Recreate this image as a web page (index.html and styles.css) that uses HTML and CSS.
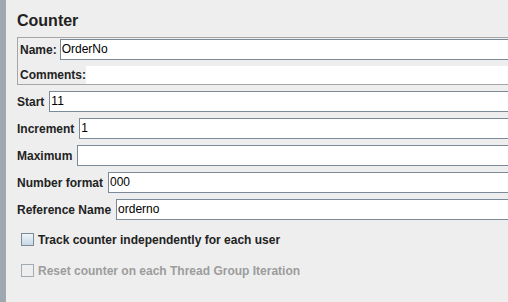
FILE: index.html
```html
<!DOCTYPE html>
<html>
<head>
<meta charset="utf-8">
<link rel="stylesheet" href="styles.css">
</head>
<body>
<div class="app">
  <div class="splitter"></div>
  <div class="main">
    <div class="title">Counter</div>
    <div class="namebox">
      <div class="name-row">
        <span class="lbl">Name:</span>
        <div class="field">OrderNo</div>
      </div>
      <div class="comments-row">
        <span class="lbl">Comments:</span>
        <div class="area"></div>
      </div>
    </div>
    <div class="rows">
      <div class="row"><span class="lbl">Start</span><div class="field">11</div></div>
      <div class="row"><span class="lbl">Increment</span><div class="field">1</div></div>
      <div class="row"><span class="lbl">Maximum</span><div class="field"></div></div>
      <div class="row"><span class="lbl">Number format</span><div class="field">000</div></div>
      <div class="row"><span class="lbl">Reference Name</span><div class="field">orderno</div></div>
    </div>
    <div class="checks">
      <label class="check"><span class="box"></span><span class="ctext">Track counter independently for each user</span></label>
      <label class="check disabled"><span class="box"></span><span class="ctext">Reset counter on each Thread Group Iteration</span></label>
    </div>
  </div>
</div>
</body>
</html>
```
FILE: styles.css
```css
html, body {
  margin: 0;
  padding: 0;
  width: 508px;
  height: 302px;
  overflow: hidden;
  background: #eeeeee;
  font-family: "Liberation Sans", Arial, sans-serif;
  font-size: 12px;
  color: #222;
}

.app {
  display: flex;
  width: 508px;
  height: 302px;
}

.splitter {
  flex: 0 0 5px;
  border-right: 1px solid #a8a8a8;
  background-color: #e4e4e4;
  background-image: radial-gradient(circle at 1px 1px, #9aa4ad 0.7px, transparent 0.8px);
  background-size: 2px 2px;
}

.main {
  flex: 1;
  min-width: 0;
  padding-left: 11px;
}

.title {
  font-size: 16px;
  font-weight: bold;
  line-height: 19px;
  padding-top: 11px;
  margin-bottom: 7px;
}

.lbl {
  font-weight: bold;
  white-space: nowrap;
}

.namebox {
  border: 1px solid #a6a6a6;
  border-right: none;
  padding: 1px 0 0 2px;
  display: flex;
  flex-direction: column;
  gap: 6px;
}

.name-row {
  display: flex;
  align-items: center;
  gap: 3px;
  height: 21px;
}

.field {
  flex: 1;
  min-width: 0;
  height: 19px;
  line-height: 19px;
  background: #fff;
  border: 1px solid #7a8a99;
  border-right: none;
  padding-left: 1px;
  color: #000;
  font-size: 12px;
}

.comments-row {
  display: flex;
  align-items: center;
  height: 18px;
}

.area {
  flex: 1;
  height: 18px;
  background: #fff;
}

.rows {
  margin-top: 6px;
  display: flex;
  flex-direction: column;
  gap: 6px;
}

.row {
  display: flex;
  align-items: center;
  gap: 5px;
  height: 21px;
}

.checks {
  margin-top: 9px;
  display: flex;
  flex-direction: column;
  gap: 10px;
  padding-left: 4px;
}

.check {
  display: flex;
  align-items: center;
  gap: 4px;
  height: 21px;
  font-weight: bold;
}

.box {
  width: 11px;
  height: 11px;
  border: 1px solid #7a8a99;
  background: linear-gradient(to bottom, #eef3f8, #c9d8e7);
}

.ctext {
  color: #222;
}

.disabled .box {
  border-color: #a3aab1;
  background: #eeeeee;
}

.disabled .ctext {
  color: #9c9c9c;
}
```
